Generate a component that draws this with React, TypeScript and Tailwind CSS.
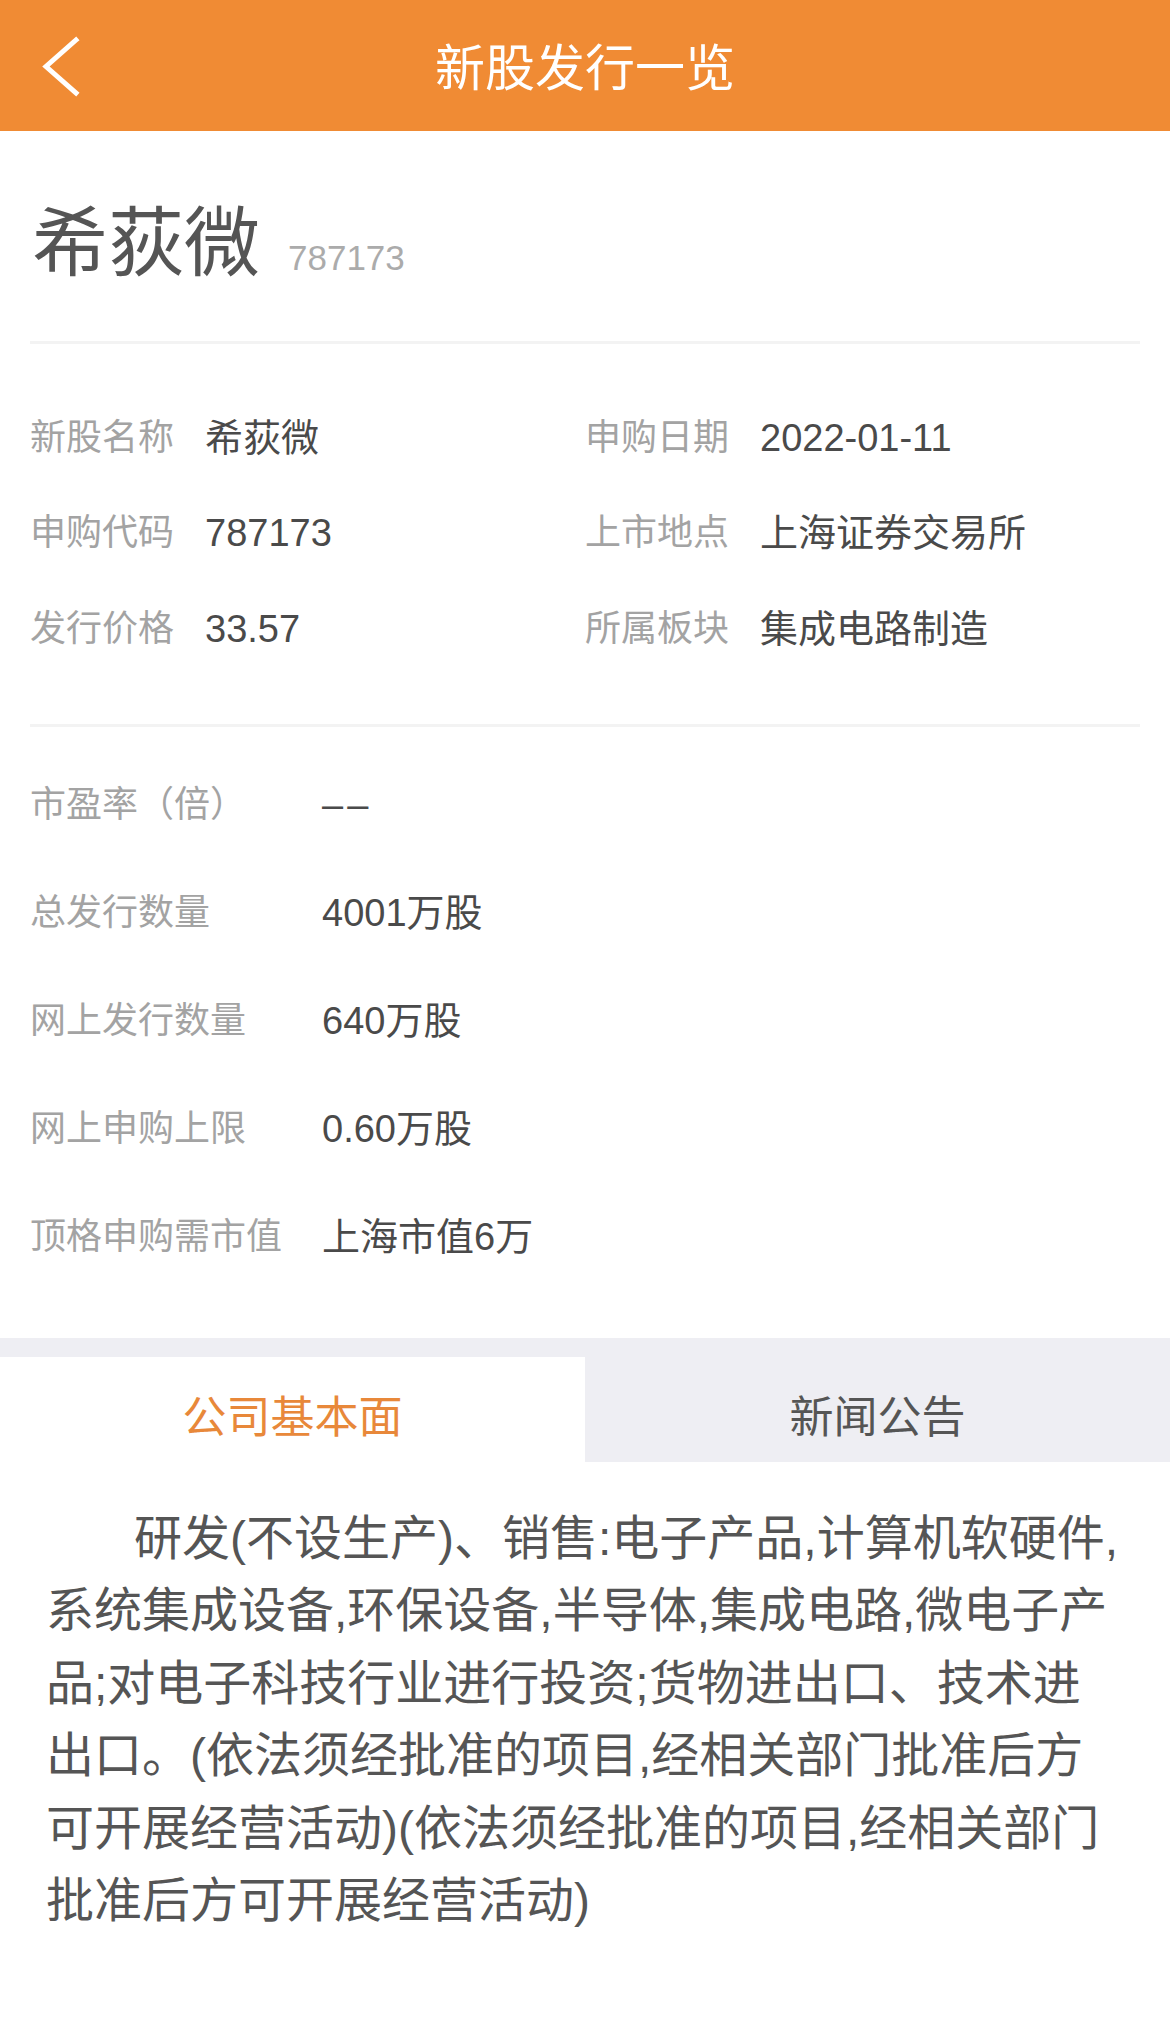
import React from "react";

const FONT = { fontFamily: '"Liberation Sans", "Noto Sans CJK SC", sans-serif' };

const topRows: [string, string, string, string][] = [
  ["新股名称", "希荻微", "申购日期", "2022-01-11"],
  ["申购代码", "787173", "上市地点", "上海证券交易所"],
  ["发行价格", "33.57", "所属板块", "集成电路制造"],
];

const listRows: [string, string][] = [
  ["市盈率（倍）", "––"],
  ["总发行数量", "4001万股"],
  ["网上发行数量", "640万股"],
  ["网上申购上限", "0.60万股"],
  ["顶格申购需市值", "上海市值6万"],
];

const bodyLines = [
  "研发(不设生产)、销售:电子产品,计算机软硬件,",
  "系统集成设备,环保设备,半导体,集成电路,微电子产",
  "品;对电子科技行业进行投资;货物进出口、技术进",
  "出口。(依法须经批准的项目,经相关部门批准后方",
  "可开展经营活动)(依法须经批准的项目,经相关部门",
  "批准后方可开展经营活动)",
];

export default function App() {
  return (
    <div className="w-[1170px] min-h-[2034px] bg-white" style={FONT}>
      {/* Header */}
      <div className="relative h-[131px] bg-[#F08B34] flex items-center justify-center">
        <svg
          className="absolute left-[36px] top-[33px]"
          width="50"
          height="66"
          viewBox="0 0 50 66"
          fill="none"
        >
          <path d="M40 7 L10 33.5 L40 60" stroke="white" strokeWidth="5" strokeLinecap="square" strokeLinejoin="miter" />
        </svg>
        <div className="text-white text-[50px] leading-none pt-[6px]">新股发行一览</div>
      </div>

      {/* Name */}
      <div className="px-[32px] pt-[75px] pb-[59px] flex items-baseline gap-[28px]">
        <div className="text-[76px] leading-[76px] text-[#555555]">希荻微</div>
        <div className="text-[35px] leading-none text-[#ABABAB]">787173</div>
      </div>
      <div className="mx-[30px] h-[3px] bg-[#F3F3F3]" />

      {/* Top grid */}
      <div className="px-[30px] pt-[46px] pb-[47px] grid grid-cols-2">
        {topRows.map((r, i) => (
          <React.Fragment key={i}>
            <div className="h-[95.5px] flex items-center">
              <div className="w-[175px] text-[36px] text-[#A3A3A3] leading-none">{r[0]}</div>
              <div className="text-[38px] text-[#4A4A4A] leading-none">{r[1]}</div>
            </div>
            <div className="h-[95.5px] flex items-center">
              <div className="w-[175px] text-[36px] text-[#A3A3A3] leading-none">{r[2]}</div>
              <div className="text-[38px] text-[#4A4A4A] leading-none">{r[3]}</div>
            </div>
          </React.Fragment>
        ))}
      </div>
      <div className="mx-[30px] h-[3px] bg-[#F3F3F3]" />

      {/* List */}
      <div className="px-[30px] pt-[24px] pb-[47px] flex flex-col">
        {listRows.map((r, i) => (
          <div key={i} className="h-[108px] flex items-center">
            <div className="w-[292px] text-[36px] text-[#A3A3A3] leading-none">{r[0]}</div>
            <div className={i === 0 ? "text-[38px] text-[#4A4A4A] leading-none tracking-[4px]" : "text-[38px] text-[#4A4A4A] leading-none"}>
              {r[1]}
            </div>
          </div>
        ))}
      </div>

      {/* Tabs */}
      <div className="bg-[#EEEEF3] pt-[19px]">
        <div className="grid grid-cols-2 h-[105px]">
          <div className="bg-white flex items-center justify-center text-[44px] text-[#E8883A] leading-none pt-[18px]">
            公司基本面
          </div>
          <div className="flex items-center justify-center text-[44px] text-[#555555] leading-none pt-[18px]">
            新闻公告
          </div>
        </div>
      </div>

      {/* Body */}
      <div className="px-[46px] pt-[41px] pb-[60px] text-[48px] leading-[72.5px] text-[#555555]">
        {bodyLines.map((l, i) => (
          <div key={i} className={i === 0 ? "whitespace-nowrap pl-[88px]" : "whitespace-nowrap"}>
            {l}
          </div>
        ))}
      </div>
    </div>
  );
}
